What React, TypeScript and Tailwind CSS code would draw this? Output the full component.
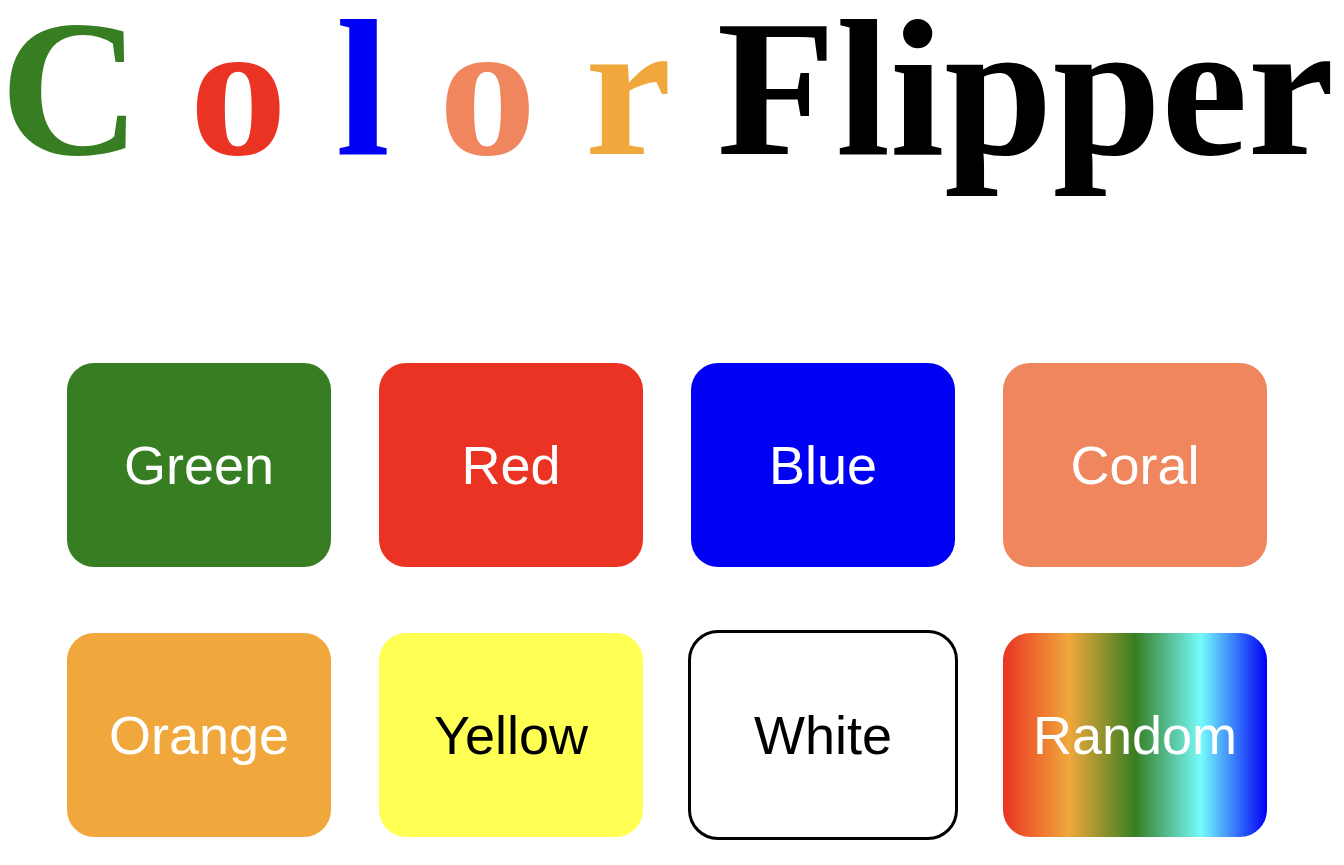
const letters = [
  { char: "C", color: "text-[#377e22]" },
  { char: "o", color: "text-[#ea3323]" },
  { char: "l", color: "text-[#0000f5]" },
  { char: "o", color: "text-[#ef865e]" },
  { char: "r", color: "text-[#f0a83c]" },
];

const swatches = [
  { name: "Green", style: "bg-[#377e22] text-white" },
  { name: "Red", style: "bg-[#ea3323] text-white" },
  { name: "Blue", style: "bg-[#0000f5] text-white" },
  { name: "Coral", style: "bg-[#ef865e] text-white" },
  { name: "Orange", style: "bg-[#f0a83c] text-white" },
  { name: "Yellow", style: "bg-[#ffff54] text-black" },
  { name: "White", style: "bg-white text-black outline-3 outline-black" },
  {
    name: "Random",
    style: "bg-[linear-gradient(to_right,#ea3323,#f0a83c,#377e22,#75fbfd,#0000f5)] text-white",
  },
];

export default function App() {
  return (
    <main className="bg-white pb-7">
      <h1 className="pr-4 text-center font-['Liberation_Serif',serif] text-[195px] leading-[176px] font-bold whitespace-nowrap text-black">
        {letters.map((letter, i) => (
          <span key={i}>
            <span className={letter.color}>{letter.char}</span>{" "}
          </span>
        ))}
        Flipper
      </h1>
      <div className="mt-[187px] grid grid-cols-4 gap-x-12 gap-y-[66px] pr-[77px] pl-[67px]">
        {swatches.map((swatch) => (
          <button
            key={swatch.name}
            type="button"
            className={`h-[204px] cursor-pointer rounded-[27px] font-['Liberation_Sans',sans-serif] text-[54px] ${swatch.style}`}
          >
            {swatch.name}
          </button>
        ))}
      </div>
    </main>
  );
}
